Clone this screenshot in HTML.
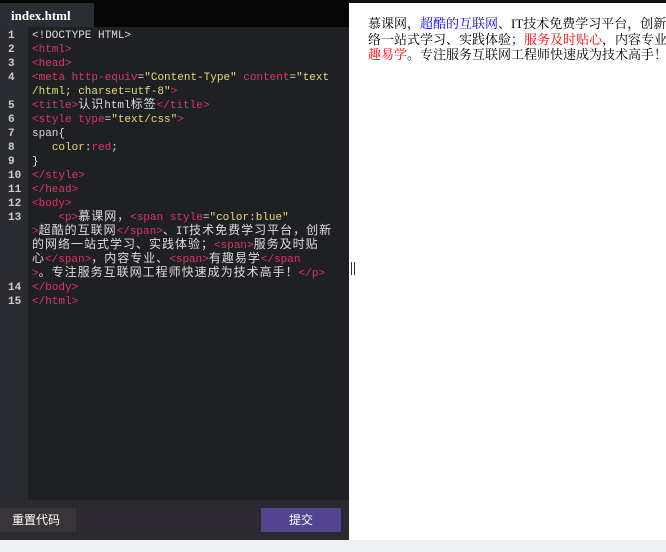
<!DOCTYPE html>
<html><head><meta charset="utf-8"><style>
*{margin:0;padding:0;box-sizing:border-box}
body{width:666px;height:552px;overflow:hidden;background:#eef0f2;position:relative;font-family:"Liberation Sans","Noto Sans CJK SC",sans-serif}
#top{position:absolute;left:0;top:0;width:349px;height:27px;background:#050505}
#tab{position:absolute;left:0;top:3px;width:94px;height:24px;background:#2a2d33;color:#fff;font:bold 13px "Liberation Serif","Noto Serif CJK SC",serif;padding:5px 0 0 11px}
#ed{position:absolute;left:0;top:27px;width:349px;height:473px;background:#1f2023}
#gut{position:absolute;left:0;top:27px;width:28px;height:473px;background:#2a2c31}
pre{position:absolute;left:0;top:29px;font:11px/14px "Liberation Mono","Noto Sans CJK SC",monospace;color:#ddd}
.c{font-size:12px;letter-spacing:1px;line-height:10px}
.n{display:inline-block;width:32px;padding-left:8px;color:#ccc;font-weight:bold}
.t{color:#e0336a}.a{color:#e0336a}.s{color:#e6db74}.y{color:#e6db74}
#bar{position:absolute;left:0;top:500px;width:349px;height:40px;background:#2c2a30}
#b1{position:absolute;left:0;top:508px;width:76px;height:24px;background:#3a3438;color:#fff;font-size:12px;line-height:24px;padding-left:12px}
#b2{position:absolute;left:261px;top:508px;width:80px;height:24px;background:#524491;color:#fff;font-size:12px;line-height:24px;text-align:center}
#rp{position:absolute;left:349px;top:0;width:317px;height:540px;background:#fff;border-top:3px solid #111;overflow:hidden}
#rp p{position:absolute;left:19px;top:13px;width:400px;font:13px/15.5px "Liberation Serif","Noto Serif CJK SC",serif;color:#000;white-space:nowrap}
#div{position:absolute;left:351px;top:262px;width:4px;height:13px;border-left:1px solid #333;border-right:1px solid #333}
</style></head><body>
<div id="top"></div><div id="tab">index.html</div>
<div id="ed"></div><div id="gut"></div>
<pre><span class="n">1</span>&lt;!DOCTYPE HTML&gt;
<span class="n">2</span><span class="t">&lt;html&gt;</span>
<span class="n">3</span><span class="t">&lt;head&gt;</span>
<span class="n">4</span><span class="t">&lt;meta</span> <span class="a">http-equiv</span>=<span class="s">"Content-Type"</span> <span class="a">content</span>=<span class="s">"text</span>
<span class="n"></span><span class="s">/html; charset=utf-8"</span><span class="t">&gt;</span>
<span class="n">5</span><span class="t">&lt;title&gt;</span><span class="c">认识</span>html<span class="c">标签</span><span class="t">&lt;/title&gt;</span>
<span class="n">6</span><span class="t">&lt;style</span> <span class="a">type</span>=<span class="s">"text/css"</span><span class="t">&gt;</span>
<span class="n">7</span>span{
<span class="n">8</span>   <span class="y">color</span>:<span class="t">red</span>;
<span class="n">9</span>}
<span class="n">10</span><span class="t">&lt;/style&gt;</span>
<span class="n">11</span><span class="t">&lt;/head&gt;</span>
<span class="n">12</span><span class="t">&lt;body&gt;</span>
<span class="n">13</span>    <span class="t">&lt;p&gt;</span><span class="c">慕课网，</span><span class="t">&lt;span</span> <span class="a">style</span>=<span class="s">"color:blue"</span>
<span class="n"></span><span class="t">&gt;</span><span class="c">超酷的互联网</span><span class="t">&lt;/span&gt;</span><span class="c">、</span>IT<span class="c">技术免费学习平台，创新</span>
<span class="n"></span><span class="c">的网络一站式学习、实践体验；</span><span class="t">&lt;span&gt;</span><span class="c">服务及时贴</span>
<span class="n"></span><span class="c">心</span><span class="t">&lt;/span&gt;</span><span class="c">，内容专业、</span><span class="t">&lt;span&gt;</span><span class="c">有趣易学</span><span class="t">&lt;/span</span>
<span class="n"></span><span class="t">&gt;</span><span class="c">。专注服务互联网工程师快速成为技术高手！</span><span class="t">&lt;/p&gt;</span>
<span class="n">14</span><span class="t">&lt;/body&gt;</span>
<span class="n">15</span><span class="t">&lt;/html&gt;</span></pre>
<div id="bar"></div><div id="b1">重置代码</div><div id="b2">提交</div>
<div id="rp"><p>慕课网，<span style="color:blue">超酷的互联网</span>、IT技术免费学习平台，创新的网<br>络一站式学习、实践体验；<span style="color:red">服务及时贴心</span>，内容专业、有<br><span style="color:red">趣易学</span>。专注服务互联网工程师快速成为技术高手！</p></div>
<div id="div"></div>
</body></html>
